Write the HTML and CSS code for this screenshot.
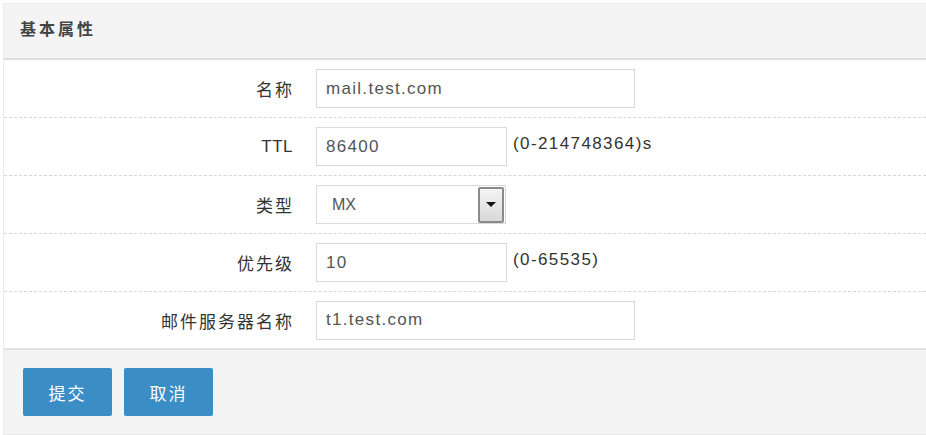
FILE: index.html
```html
<!DOCTYPE html>
<html lang="zh-CN">
<head>
    <meta charset="UTF-8">
    <meta name="viewport" content="width=device-width, initial-scale=1.0">
    <title>基本属性</title>
    <link rel="stylesheet" href="styles.css">
</head>
<body>
    <div class="panel">
        <div class="panel-head">基本属性</div>

        <div class="form-body">
            <div class="row">
                <label class="row-label">名称</label>
                <div class="row-field">
                    <input type="text" class="text-input wide" value="mail.test.com">
                </div>
            </div>
            <div class="row">
                <label class="row-label latin">TTL</label>
                <div class="row-field">
                    <input type="text" class="text-input" value="86400">
                    <span class="hint">(0-214748364)s</span>
                </div>
            </div>
            <div class="row">
                <label class="row-label">类型</label>
                <div class="row-field">
                    <div class="select-box">
                        <span class="select-value">MX</span>
                        <span class="select-btn"><span class="caret"></span></span>
                    </div>
                </div>
            </div>
            <div class="row">
                <label class="row-label">优先级</label>
                <div class="row-field">
                    <input type="text" class="text-input" value="10">
                    <span class="hint">(0-65535)</span>
                </div>
            </div>
            <div class="row last">
                <label class="row-label">邮件服务器名称</label>
                <div class="row-field">
                    <input type="text" class="text-input wide" value="t1.test.com">
                </div>
            </div>
        </div>

        <div class="panel-foot">
            <button class="btn">提交</button>
            <button class="btn">取消</button>
        </div>
    </div>
</body>
</html>
```

FILE: styles.css
```css
html, body {
    overflow: hidden;
}
body {
    margin: 0;
    font-family: "Liberation Sans", "Noto Sans CJK SC", sans-serif;
    font-size: 14px;
    color: #333;
    background: #fff;
}
.panel {
    margin: 3px 0 0 3px;
    border: 1px solid #ececec;
    border-right: none;
    border-bottom: none;
}
.panel-head {
    height: 54px;
    line-height: 52px;
    padding-left: 16px;
    background: #f4f4f4;
    border-bottom: 2px solid #dedede;
    font-size: 16px;
    letter-spacing: 3px;
    font-weight: bold;
    color: #444;
}
.form-body {
    background: #fff;
}
.row {
    display: flex;
    align-items: center;
    height: 57px;
    border-bottom: 1px dashed #d6d6d6;
}
.row.last {
    height: 56px;
    border-bottom: 2px solid #e2e2e2;
}
.row-label {
    box-sizing: border-box;
    width: 312px;
    text-align: right;
    padding-right: 22px;
    font-size: 17px;
    letter-spacing: 2px;
    color: #333;
}
.row-label.latin {
    letter-spacing: 0.5px;
    padding-right: 23px;
}
.row-field {
    display: flex;
    align-items: center;
}
.text-input {
    box-sizing: border-box;
    width: 191px;
    height: 39px;
    padding: 0 9px;
    border: 1px solid #d9d9d9;
    font-family: inherit;
    font-size: 17px;
    letter-spacing: 1.3px;
    color: #555;
    outline: none;
}
.text-input.wide {
    width: 319px;
}
.hint {
    margin-left: 6px;
    margin-top: -5px;
    font-size: 17px;
    letter-spacing: 1.4px;
    color: #333;
}
.select-box {
    box-sizing: border-box;
    display: flex;
    align-items: center;
    justify-content: space-between;
    width: 190px;
    height: 39px;
    border: 1px solid #d9d9d9;
    padding-right: 1px;
}
.select-value {
    padding-left: 15px;
    font-size: 16px;
    color: #555;
}
.select-btn {
    box-sizing: border-box;
    display: flex;
    align-items: center;
    justify-content: center;
    width: 26px;
    height: 36px;
    border: 2px solid #8a8a8a;
    border-radius: 2px;
    background: linear-gradient(#f4f4f4, #d8d8d8);
}
.caret {
    width: 0;
    height: 0;
    border-left: 5px solid transparent;
    border-right: 5px solid transparent;
    border-top: 5px solid #111;
}
.panel-foot {
    display: flex;
    gap: 12px;
    height: 85px;
    padding: 18px 0 0 19px;
    box-sizing: border-box;
    background: #f4f4f4;
    border-bottom: 1px solid #e8e8e8;
}
.btn {
    width: 89px;
    height: 48px;
    border: none;
    border-radius: 2px;
    background: #3a8dc5;
    color: #fff;
    font-family: inherit;
    font-size: 17px;
    letter-spacing: 2px;
    cursor: pointer;
}
```
